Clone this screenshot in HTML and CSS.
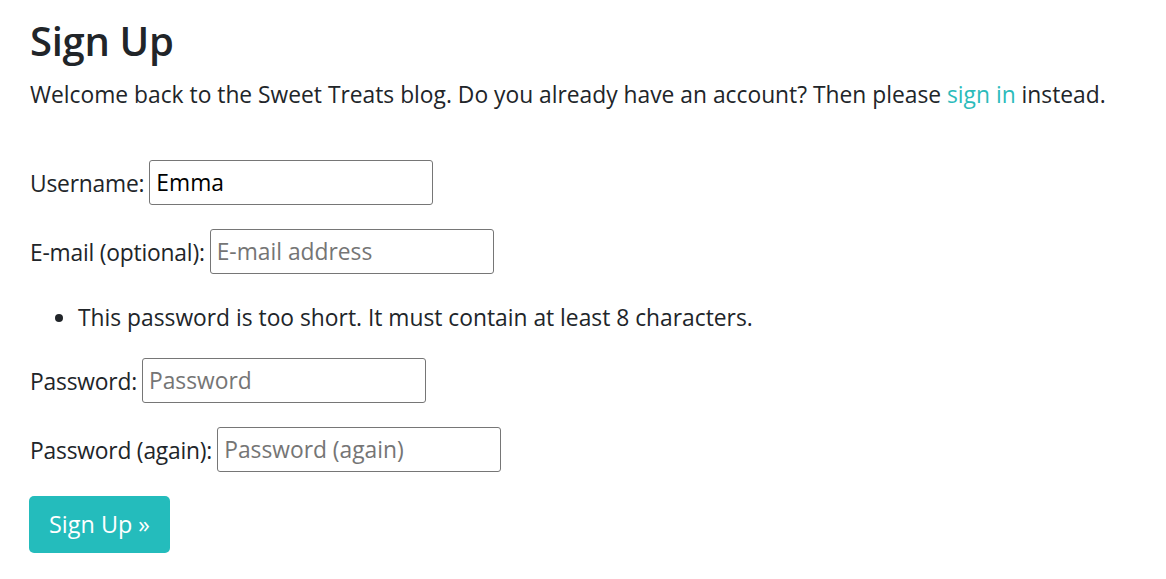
FILE: index.html
```html
<!DOCTYPE html>
<html lang="en">
<head>
<meta charset="utf-8">
<title>Sign Up</title>
<link rel="stylesheet" href="styles.css">
</head>
<body>
<main class="page">
  <h1 class="title">Sign Up</h1>
  <p class="intro">Welcome back to the Sweet Treats blog. Do you already have an account? Then please <a class="link" href="#">sign in</a> instead.</p>
  <form class="signup">
    <p class="row"><label class="label" for="u">Username:</label> <input class="field" id="u" type="text" value="Emma"></p>
    <p class="row"><label class="label" for="e">E-mail (optional):</label> <input class="field" id="e" type="email" placeholder="E-mail address"></p>
    <ul class="errors"><li>This password is too short. It must contain at least 8 characters.</li></ul>
    <p class="row"><label class="label" for="p1">Password:</label> <input class="field" id="p1" type="password" placeholder="Password"></p>
    <p class="row"><label class="label" for="p2">Password (again):</label> <input class="field" id="p2" type="password" placeholder="Password (again)"></p>
    <button class="btn" type="submit">Sign Up »</button>
  </form>
</main>
</body>
</html>
```
FILE: styles.css
```css
body {
  margin: 0;
  font-family: "Open Sans", "Noto Sans", sans-serif;
  font-size: 22.8px;
  color: #212529;
  background: #fff;
}
.page {
  padding: 16.5px 30px 0 30px;
}
.title {
  font-size: 40px;
  font-weight: 600;
  line-height: 1.2;
  margin: 0 0 13px 0;
  letter-spacing: -0.3px;
}
.intro {
  margin: 0 0 48px 0;
  line-height: 1.5;
}
.link {
  color: #2bbbbb;
  text-decoration: none;
}
.signup {
  margin: 0;
}
.row {
  margin: 0 0 24px 0;
  display: flex;
  align-items: center;
  gap: 5px;
}
.label {
  line-height: 1.5;
  padding-top: 3px;
  letter-spacing: -0.2px;
}
.field {
  box-sizing: border-box;
  width: 284px;
  height: 45px;
  font: inherit;
  color: #000;
  padding: 0 6px;
  border: 1px solid #767676;
  border-radius: 3px;
  margin: 0;
}
.field::placeholder {
  color: #757575;
}
.errors {
  margin: 27px 0 23px 0;
  padding-left: 48px;
  line-height: 1.5;
}
.btn {
  font: inherit;
  font-size: 23.4px;
  color: #fff;
  background: #24bcbc;
  border: none;
  border-radius: 5px;
  width: 141px;
  height: 57px;
  padding: 0;
  margin-left: -1px;
}
```
